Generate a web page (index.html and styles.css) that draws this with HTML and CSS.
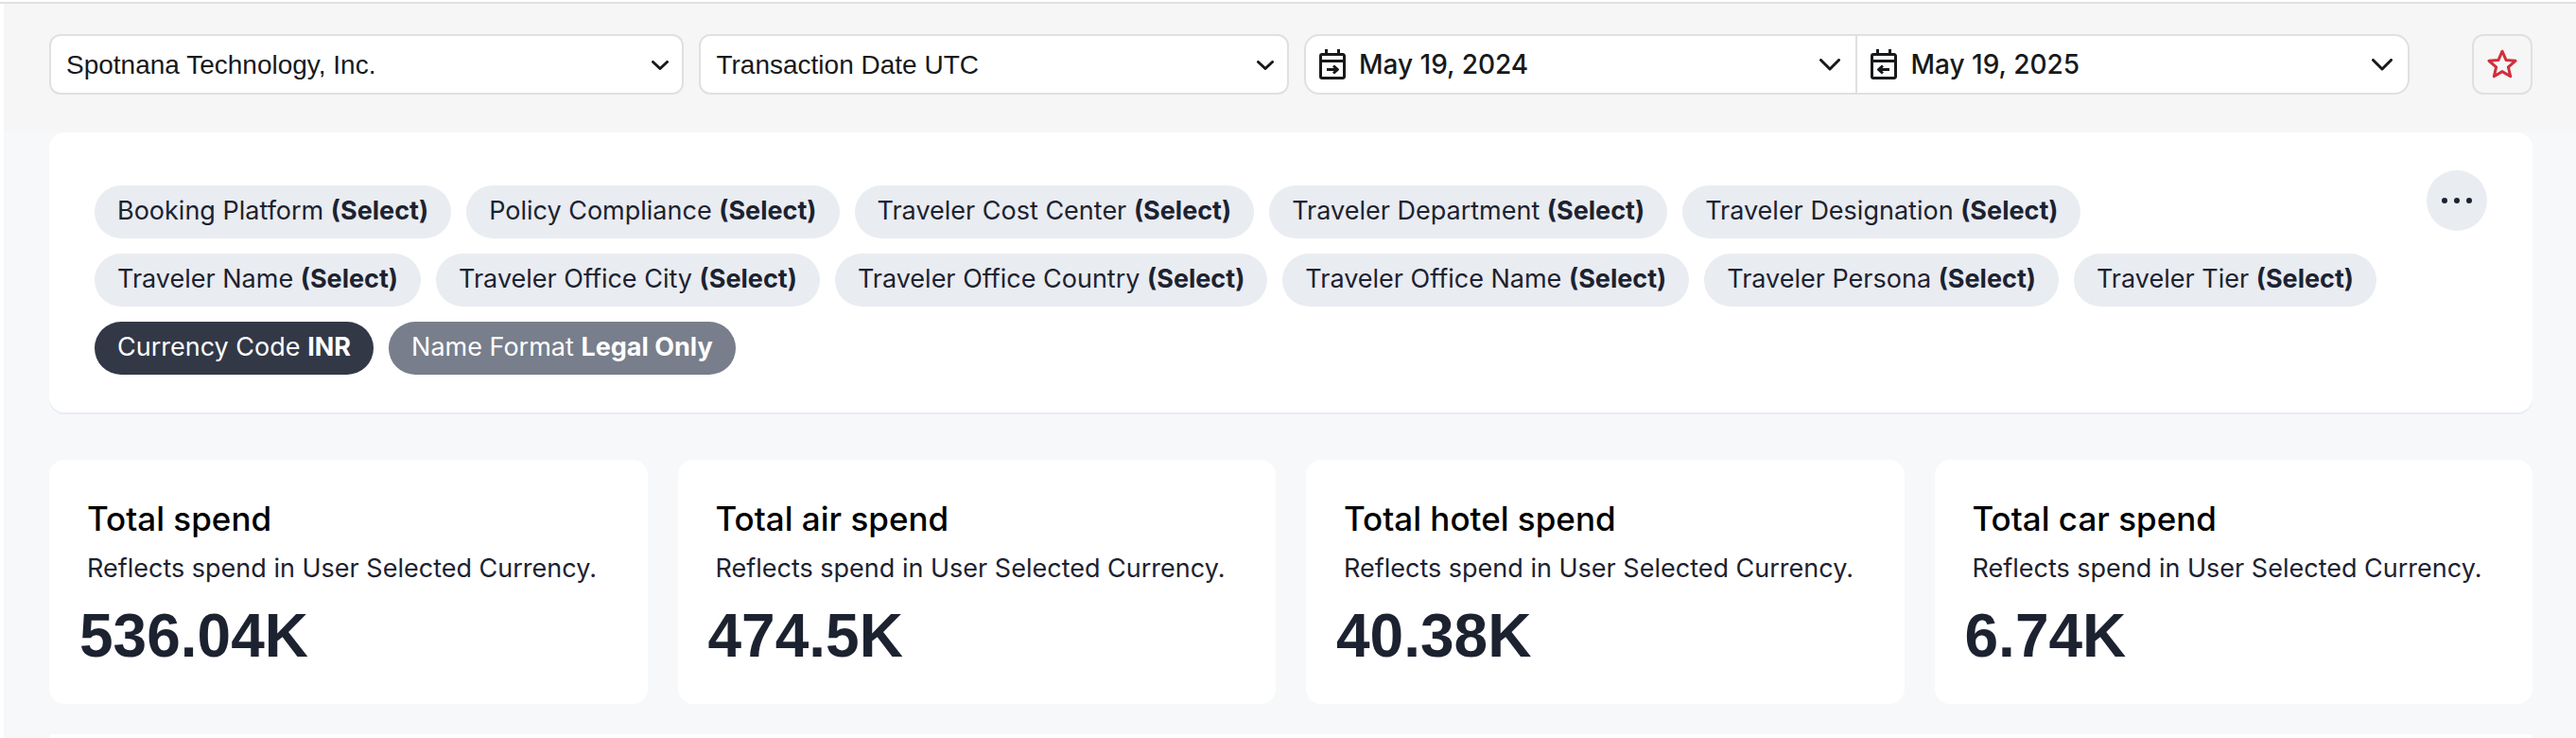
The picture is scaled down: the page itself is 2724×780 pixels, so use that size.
FILE: index.html
```html
<!DOCTYPE html>
<html lang="en">
<head>
    <meta charset="UTF-8">
    <meta name="viewport" content="width=device-width, initial-scale=1.0">
    <title>Total spend</title>
    <link rel="stylesheet" href="styles.css">
</head>
<body>
    <div class="app">
        <header class="topbar">
            <div class="filters">
                <div class="select-box company">
                    <select aria-label="Company">
                        <option>Spotnana Technology, Inc.</option>
                    </select>
                    <svg class="arrow-small" viewBox="0 0 18 10"><path d="M1.5 1.5 9 8.5l7.5-7"/></svg>
                </div>
                <div class="select-box date-type">
                    <select aria-label="Date type">
                        <option>Transaction Date UTC</option>
                    </select>
                    <svg class="arrow-small" viewBox="0 0 18 10"><path d="M1.5 1.5 9 8.5l7.5-7"/></svg>
                </div>
                <div class="date-range">
                    <button type="button" class="date">
                        <svg class="calendar" viewBox="0 0 28 32">
                            <path d="M3 5.5h22a1.5 1.5 0 0 1 1.5 1.5v22a1.5 1.5 0 0 1-1.5 1.5H3A1.5 1.5 0 0 1 1.5 29V7A1.5 1.5 0 0 1 3 5.5zM1.5 12.5h25M7.5 0v5.5M20.5 0v5.5M8 21.5h11M15 17.5l4.5 4-4.5 4"/>
                        </svg>
                        <span>May 19, 2024</span>
                        <svg class="arrow" viewBox="0 0 22 13"><path d="M1.5 1.5 11 11l9.5-9.5"/></svg>
                    </button>
                    <button type="button" class="date">
                        <svg class="calendar" viewBox="0 0 28 32">
                            <path d="M3 5.5h22a1.5 1.5 0 0 1 1.5 1.5v22a1.5 1.5 0 0 1-1.5 1.5H3A1.5 1.5 0 0 1 1.5 29V7A1.5 1.5 0 0 1 3 5.5zM1.5 12.5h25M7.5 0v5.5M20.5 0v5.5M20 21.5H9M13 17.5l-4.5 4 4.5 4"/>
                        </svg>
                        <span>May 19, 2025</span>
                        <svg class="arrow" viewBox="0 0 22 13"><path d="M1.5 1.5 11 11l9.5-9.5"/></svg>
                    </button>
                </div>
            </div>
            <button type="button" class="favorite" aria-label="Favorite">
                <svg viewBox="0 0 32 32"><path d="M16 2.2l4 9.2 10 .9-7.6 6.6 2.3 9.9L16 23.6l-8.7 5.2 2.3-9.9L2 12.3l10-.9z"/></svg>
            </button>
        </header>

        <main>
            <section class="card pills-card">
                <div class="pills">
                    <button type="button" class="pill">Booking Platform <b>(Select)</b></button>
                    <button type="button" class="pill">Policy Compliance <b>(Select)</b></button>
                    <button type="button" class="pill">Traveler Cost Center <b>(Select)</b></button>
                    <button type="button" class="pill">Traveler Department <b>(Select)</b></button>
                    <button type="button" class="pill">Traveler Designation <b>(Select)</b></button>
                    <button type="button" class="pill">Traveler Name <b>(Select)</b></button>
                    <button type="button" class="pill">Traveler Office City <b>(Select)</b></button>
                    <button type="button" class="pill">Traveler Office Country <b>(Select)</b></button>
                    <button type="button" class="pill">Traveler Office Name <b>(Select)</b></button>
                    <button type="button" class="pill">Traveler Persona <b>(Select)</b></button>
                    <button type="button" class="pill">Traveler Tier <b>(Select)</b></button>
                    <button type="button" class="pill pill-dark">Currency Code <b>INR</b></button>
                    <button type="button" class="pill pill-gray">Name Format <b>Legal Only</b></button>
                </div>
                <button type="button" class="more" aria-label="More">
                    <svg viewBox="0 0 32 8"><circle cx="3" cy="4" r="3"/><circle cx="16" cy="4" r="3"/><circle cx="29" cy="4" r="3"/></svg>
                </button>
            </section>

            <section class="totals">
                <article class="card total">
                    <h2>Total spend</h2>
                    <p>Reflects spend in User Selected Currency.</p>
                    <div class="value">536.04K</div>
                </article>
                <article class="card total">
                    <h2>Total air spend</h2>
                    <p>Reflects spend in User Selected Currency.</p>
                    <div class="value">474.5K</div>
                </article>
                <article class="card total">
                    <h2>Total hotel spend</h2>
                    <p>Reflects spend in User Selected Currency.</p>
                    <div class="value">40.38K</div>
                </article>
                <article class="card total">
                    <h2>Total car spend</h2>
                    <p>Reflects spend in User Selected Currency.</p>
                    <div class="value">6.74K</div>
                </article>
            </section>

            <section class="card next-card"></section>
        </main>
    </div>
</body>
</html>
```
FILE: styles.css
```css
* {
    box-sizing: border-box;
}

body {
    margin: 0;
    background-color: #fff;
    font-family: Inter, sans-serif;
    color: #1c2230;
}

button,
select {
    margin: 0;
    font-family: inherit;
    color: inherit;
    cursor: pointer;
}

svg {
    display: block;
    flex: none;
    fill: none;
    stroke: #18191b;
    stroke-width: 3;
    stroke-linecap: round;
    stroke-linejoin: round;
}

.app {
    display: flex;
    flex-direction: column;
    min-height: 100vh;
    padding-top: 2px;
}

/* top bar */
.topbar {
    display: flex;
    gap: 66px;
    padding: 32px 46px 40px 48px;
    border-left: 4px solid #fff;
    background-color: #f6f6f6;
    box-shadow: 0 -2px 0 #e0e0e0;
    margin-top: 2px;
    color: #18191b;
}

.filters {
    display: flex;
    flex: 1;
    gap: 16px;
}

.select-box {
    position: relative;
    height: 64px;
}

.company {
    flex: 672 1 0;
}

.date-type {
    flex: 624 1 0;
}

.select-box select {
    width: 100%;
    height: 100%;
    padding: 0 48px 0 16px;
    border: 2px solid #e0e0e0;
    border-radius: 12px;
    background-color: #fff;
    font-family: "Liberation Sans", sans-serif;
    font-size: 28px;
    appearance: none;
}

.arrow-small {
    position: absolute;
    right: 16px;
    top: 28px;
    width: 18px;
    height: 10px;
    pointer-events: none;
}

.date-range {
    display: flex;
    flex: 1166 1 0;
    height: 64px;
    border: 2px solid #e0e0e0;
    border-radius: 16px;
    background-color: #fff;
    overflow: hidden;
}

.date {
    display: flex;
    flex: 1;
    align-items: center;
    gap: 14px;
    padding: 0 16px 0 14px;
    border: 0;
    background: none;
    font-size: 28px;
    font-weight: 500;
}

.date + .date {
    border-left: 2px solid #e0e0e0;
}

.calendar {
    width: 28px;
    height: 32px;
    stroke-linecap: butt;
}

.arrow {
    width: 22px;
    height: 13px;
    margin-left: auto;
}

.favorite {
    display: flex;
    align-items: center;
    justify-content: center;
    width: 64px;
    height: 64px;
    padding: 0;
    border: 2px solid #e0e0e0;
    border-radius: 12px;
    background: none;
}

.favorite svg {
    width: 32px;
    height: 32px;
    stroke: #d0303c;
}

/* content */
main {
    display: flex;
    flex: 1;
    flex-direction: column;
    margin-left: 4px;
    padding: 0 46px 0 48px;
    background-color: #f7f8fa;
}

.card {
    border-radius: 16px;
    background-color: #fff;
}

.pills-card {
    display: flex;
    align-items: flex-start;
    gap: 48px;
    margin-bottom: 50px;
    padding: 40px 48px;
    box-shadow: 0 2px 0 #e9ecf1;
}

.pills {
    display: flex;
    flex: 1;
    flex-wrap: wrap;
    gap: 16px;
    padding-top: 16px;
}

.pill {
    padding: 13px 24px 15px;
    border: 0;
    border-radius: 28px;
    background-color: #e9ecf1;
    font-size: 27px;
    line-height: 28px;
    white-space: nowrap;
}

.pill b {
    font-weight: 700;
}

.pill-dark {
    background-color: #323846;
    color: #fff;
}

.pill-gray {
    background-color: #787e8b;
    color: #fff;
}

.more {
    display: flex;
    align-items: center;
    justify-content: center;
    width: 64px;
    height: 64px;
    padding: 0;
    border: 0;
    border-radius: 50%;
    background-color: #e9ecf1;
}

.more svg {
    width: 32px;
    height: 8px;
    fill: #1c2230;
    stroke: none;
}

.totals {
    display: grid;
    grid-template-columns: repeat(4, 1fr);
    gap: 32px;
    margin-bottom: 32px;
}

.total {
    padding: 40px 32px 36px;
}

.total h2 {
    margin: 0 0 12px;
    padding-left: 8px;
    font-size: 35px;
    font-weight: 500;
    line-height: 44px;
    color: #000;
}

.total p {
    margin: 0 0 16px;
    padding-left: 8px;
    font-size: 27px;
    line-height: 38px;
}

.value {
    font-family: "Liberation Sans", sans-serif;
    font-size: 64px;
    font-weight: 700;
    line-height: 72px;
}

/* top edge of the next section, fills what is left of the window */
.next-card {
    flex: 1;
    border-radius: 16px 16px 0 0;
}
```
